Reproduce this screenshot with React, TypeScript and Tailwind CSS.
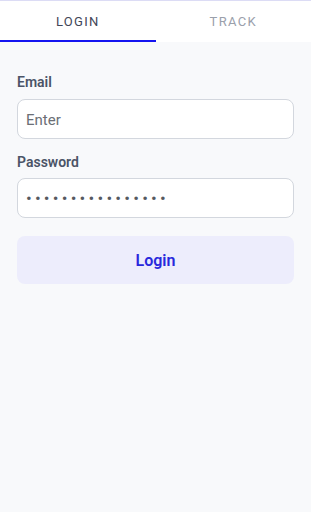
import { useState } from 'react';

const font = { fontFamily: 'Roboto, "Noto Sans", sans-serif' };

export default function App() {
  const [tab, setTab] = useState<'login' | 'track'>('login');

  return (
    <div className="flex min-h-[512px] w-[311px] flex-col overflow-hidden bg-[#f8f9fb]" style={font}>
      <div className="flex border-t border-[#dcdcf5] bg-white">
        {(['login', 'track'] as const).map((t) => (
          <button
            key={t}
            onClick={() => setTab(t)}
            className={
              'h-[41px] flex-1 border-b-2 pt-[2px] text-[13px] tracking-[0.1em] uppercase ' +
              (tab === t ? 'border-[#1414f0] text-[#3f4658]' : 'border-transparent text-[#9aa0ab]')
            }
          >
            {t}
          </button>
        ))}
      </div>

      <form className="flex flex-col px-[17px] pt-[30px]" onSubmit={(e) => e.preventDefault()}>
        <label className="mb-[7px] text-[14px] leading-5 font-semibold text-[#4b5467]">Email</label>
        <input
          type="email"
          placeholder="Enter"
          className="h-10 w-full rounded-lg border border-[#d3d7de] bg-white px-2 pt-px text-[15px] text-[#374151] outline-none placeholder:text-[#6b6f76]"
        />

        <label className="mt-[13px] mb-[6px] text-[14px] leading-5 font-semibold text-[#4b5467]">Password</label>
        <input
          type="password"
          defaultValue="passwordpassword"
          className="h-10 w-full rounded-lg border border-[#d3d7de] bg-white px-2 text-[17px] tracking-[3.2px] text-[#55595f] outline-none"
        />

        <button
          type="submit"
          className="mt-[18px] h-12 w-full rounded-lg bg-[#ededfc] pt-[2px] text-[16px] font-semibold text-[#2828dc]"
        >
          Login
        </button>
      </form>
    </div>
  );
}
